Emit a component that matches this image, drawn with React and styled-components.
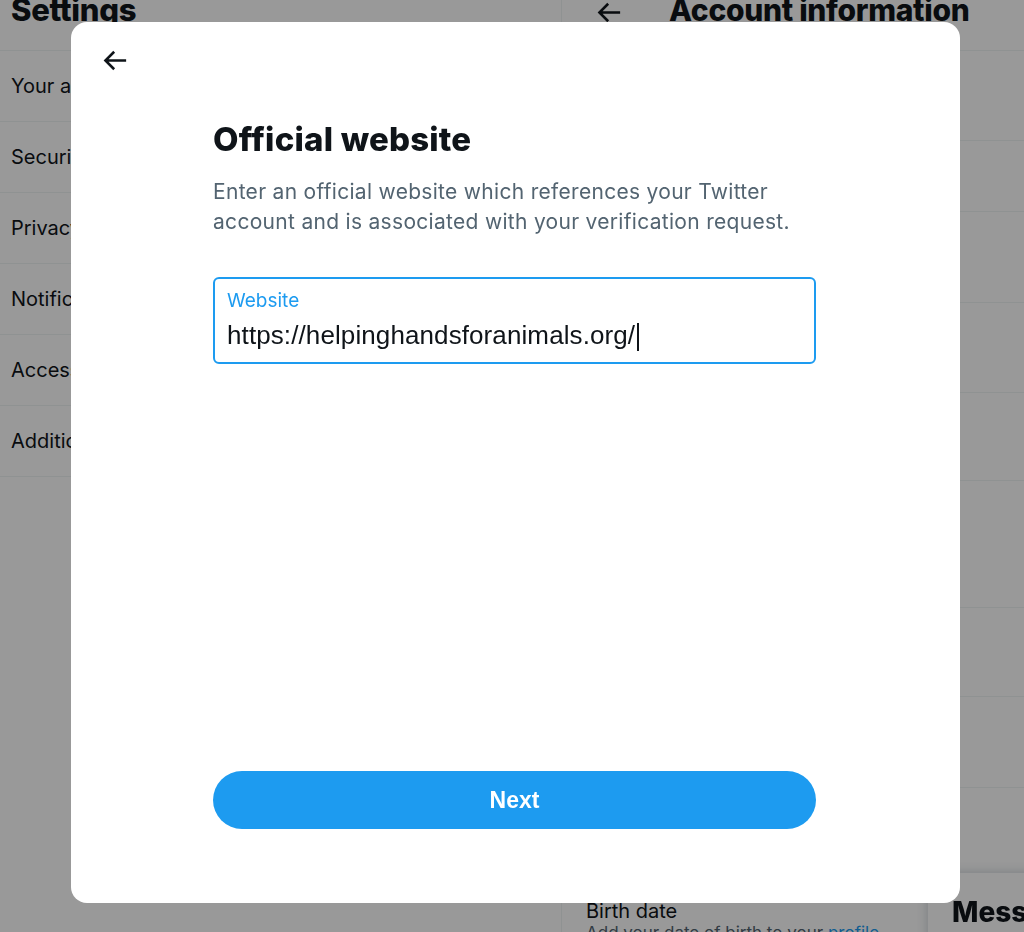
import React from 'react'
import styled, { createGlobalStyle } from 'styled-components'

const GlobalStyle = createGlobalStyle`
  html, body {
    margin: 0;
    padding: 0;
    background: #ffffff;
    overflow: hidden;
  }
  body {
    font-family: Inter, "Noto Sans", sans-serif;
    color: #0f1419;
  }
`

const Page = styled.div`
  display: grid;
  grid-template-columns: 562px 1fr;
  height: 932px;
  overflow: hidden;
`

const LeftColumn = styled.section`
  border-right: 1px solid #eff3f4;
`

const ColumnHeader = styled.header`
  display: flex;
  align-items: center;
  gap: ${p => p.gap || 0}px;
  height: 51px;
  padding-left: ${p => p.pad}px;
  border-bottom: 1px solid #eff3f4;
  box-sizing: border-box;
  overflow: hidden;
`

const HeaderTitle = styled.h1`
  margin: ${p => -p.lift}px 0 0;
  font-size: ${p => p.size}px;
  font-weight: 800;
  letter-spacing: -0.3px;
  white-space: nowrap;
`

const HeaderBack = styled.span`
  display: flex;
  margin-top: -25px;
  color: #0f1419;
`

const MenuRow = styled.div`
  display: flex;
  align-items: center;
  height: 70px;
  padding-left: 11px;
  border-bottom: 1px solid #eff3f4;
  font-size: 20px;
  white-space: nowrap;
`

const RightColumn = styled.section`
  display: flex;
  flex-direction: column;
`

const InfoRow = styled.div`
  display: flex;
  flex-direction: column;
  justify-content: center;
  gap: 4px;
  height: ${p => p.h}px;
  padding: 0 24px;
  border-bottom: 1px solid #eff3f4;
  box-sizing: border-box;
`

const InfoTitle = styled.div`
  font-size: 20px;
  white-space: nowrap;
`

const InfoSub = styled.div`
  font-size: 17px;
  color: #536471;
  white-space: nowrap;
`

const LastRow = styled.div`
  padding: 23px 24px 0;
`

const Link = styled.span`
  color: #1d9bf0;
`

const Drawer = styled.aside`
  position: fixed;
  left: 928px;
  top: 873px;
  width: 500px;
  height: 120px;
  background: #ffffff;
  border-radius: 16px 0 0 0;
  box-shadow: 0 0 12px rgba(101, 119, 134, 0.35);
  padding: 22px 24px;
  box-sizing: border-box;
`

const DrawerTitle = styled.h2`
  margin: 0;
  font-size: 28px;
  font-weight: 800;
`

const Backdrop = styled.div`
  position: fixed;
  inset: 0;
  background: rgba(0, 0, 0, 0.4);
  display: flex;
  align-items: flex-start;
  padding: 22px 0 0 71px;
`

const Modal = styled.div`
  display: flex;
  flex-direction: column;
  width: 889px;
  height: 881px;
  background: #ffffff;
  border-radius: 16px;
  box-sizing: border-box;
  padding-bottom: 74px;
`

const ModalHeader = styled.div`
  display: flex;
  align-items: center;
  height: 76px;
  padding-left: 28px;
  flex-shrink: 0;
`

const IconButton = styled.button`
  display: flex;
  padding: 0;
  border: 0;
  background: none;
  color: #0f1419;
  cursor: pointer;
`

const Body = styled.div`
  display: flex;
  flex-direction: column;
  flex: 1;
  width: 603px;
  margin: 0 144px 0 142px;
`

const Title = styled.h2`
  margin: 22px 0 0;
  font-size: 33px;
  line-height: 38px;
  font-weight: 800;
  letter-spacing: 0.2px;
  color: #0f1419;
`

const Description = styled.p`
  margin: 19px 0 0;
  font-size: 21px;
  line-height: 30px;
  letter-spacing: 0.3px;
  color: #536471;
`

const Field = styled.label`
  display: flex;
  flex-direction: column;
  margin-top: 40px;
  height: 87px;
  box-sizing: border-box;
  padding: 11px 12px 0;
  border: 2px solid #1d9bf0;
  border-radius: 6px;
`

const FieldLabel = styled.span`
  font-size: 19px;
  line-height: 22px;
  color: #1d9bf0;
`

const FieldValue = styled.span`
  display: flex;
  align-items: center;
  margin-top: 7px;
  font-family: "Liberation Sans", Arial, sans-serif;
  font-size: 26px;
  line-height: 32px;
  letter-spacing: 0.1px;
  color: #0f1419;
`

const Caret = styled.span`
  display: inline-block;
  width: 1.5px;
  height: 28px;
  margin: 3px 0 0 2px;
  background: #0f1419;
`

const Spacer = styled.div`
  flex: 1;
`

const PrimaryButton = styled.button`
  height: 58px;
  width: 100%;
  border: 0;
  border-radius: 29px;
  background: #1d9bf0;
  color: #ffffff;
  font-family: "Liberation Sans", Arial, sans-serif;
  font-size: 23px;
  font-weight: 700;
  cursor: pointer;
`

const BackArrow = ({ size = 31 }) => (
  <svg width={size} height={size} viewBox="0 0 24 24" fill="currentColor" aria-hidden="true">
    <path d="M7.414 13l5.043 5.04-1.414 1.42L3.586 12l7.457-7.46 1.414 1.42L7.414 11H21v2H7.414z" />
  </svg>
)

const menu = [
  'Your account',
  'Security and account access',
  'Privacy and safety',
  'Notifications',
  'Accessibility, display, and languages',
  'Additional resources',
]

const info = [
  { h: 90, title: 'Username', sub: '@helpinghands' },
  { h: 71, title: 'Phone', sub: '' },
  { h: 91, title: 'Email', sub: 'contact@helpinghandsforanimals.org' },
  { h: 90, title: 'Verified', sub: 'No. Request Verification' },
  { h: 88, title: 'Protected Tweets', sub: 'No' },
  { h: 127, title: 'Account creation', sub: 'Mar 3, 2012, 10:14:52 AM' },
  { h: 89, title: 'Country', sub: 'United States' },
  { h: 91, title: 'Languages', sub: 'English' },
  { h: 88, title: 'Gender', sub: 'Female' },
]

export default function App() {
  return (
    <>
      <GlobalStyle />
      <Page>
        <LeftColumn>
          <ColumnHeader pad={11}>
            <HeaderTitle size={31} lift={32}>Settings</HeaderTitle>
          </ColumnHeader>
          {menu.map(item => (
            <MenuRow key={item}>{item}</MenuRow>
          ))}
        </LeftColumn>
        <RightColumn>
          <ColumnHeader pad={31} gap={45}>
            <HeaderBack>
              <BackArrow size={31} />
            </HeaderBack>
            <HeaderTitle size={30} lift={31}>Account information</HeaderTitle>
          </ColumnHeader>
          {info.map(row => (
            <InfoRow key={row.title} h={row.h}>
              <InfoTitle>{row.title}</InfoTitle>
              {row.sub && <InfoSub>{row.sub}</InfoSub>}
            </InfoRow>
          ))}
          <LastRow>
            <InfoTitle>Birth date</InfoTitle>
            <InfoSub>
              Add your date of birth to your <Link>profile</Link>
            </InfoSub>
          </LastRow>
        </RightColumn>
      </Page>
      <Drawer>
        <DrawerTitle>Messages</DrawerTitle>
      </Drawer>
      <Backdrop>
        <Modal role="dialog">
          <ModalHeader>
            <IconButton aria-label="Back">
              <BackArrow />
            </IconButton>
          </ModalHeader>
          <Body>
            <Title>Official website</Title>
            <Description>
              Enter an official website which references your Twitter account and is associated
              with your verification request.
            </Description>
            <Field>
              <FieldLabel>Website</FieldLabel>
              <FieldValue>
                https://helpinghandsforanimals.org/
                <Caret />
              </FieldValue>
            </Field>
            <Spacer />
            <PrimaryButton>Next</PrimaryButton>
          </Body>
        </Modal>
      </Backdrop>
    </>
  )
}
